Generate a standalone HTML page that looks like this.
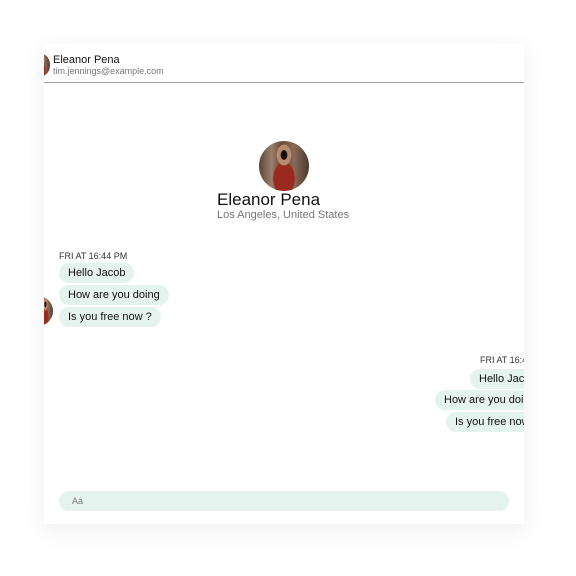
<!DOCTYPE html>
<html><head><style>
body{margin:0;width:576px;height:576px;background:#fff;font-family:"Liberation Sans",sans-serif;overflow:hidden;position:relative}
.card{position:absolute;left:44px;top:44px;width:480px;height:480px;background:#fff;box-shadow:0 6px 24px rgba(0,0,0,.07);overflow:hidden}
.abs{position:absolute;white-space:nowrap}
.b{position:absolute;height:20px;line-height:21px;background:#e5f3ef;border-radius:10px;font-size:11px;color:#111;padding:0 9px;white-space:nowrap}
.ts{position:absolute;font-size:9px;color:#333;white-space:nowrap}
.av{position:absolute;border-radius:50%;background:radial-gradient(ellipse at 50% 28%,#1a0f0a 0 9%,#b88a70 10% 20%,transparent 21%),radial-gradient(ellipse at 50% 75%,#9a2a20 0 30%,transparent 31%),linear-gradient(90deg,#5a4438,#9a7e6a 25%,#6a4a3a 45%,#8a6a58 70%,#4a3a30)}
</style></head><body>
<div class="card">
  <div class="av" style="left:-10px;top:10px;width:16px;height:22px"></div>
  <div class="abs" style="left:9px;top:10px;font-size:11px;color:#111">Eleanor Pena</div>
  <div class="abs" style="left:9px;top:22px;font-size:9px;color:#777">tim.jennings@example.com</div>
  <div style="position:absolute;left:0;top:38px;width:480px;height:1px;background:#9a9ea6"></div>

  <div class="av" style="left:215px;top:97px;width:50px;height:50px"></div>
  <div class="abs" style="left:173px;top:146px;font-size:17px;color:#111">Eleanor Pena</div>
  <div class="abs" style="left:173px;top:165px;font-size:11px;color:#777">Los Angeles, United States</div>

  <div class="ts" style="left:15px;top:207px">FRI AT 16:44 PM</div>
  <div class="b" style="left:15px;top:219px">Hello Jacob</div>
  <div class="b" style="left:15px;top:241px">How are you doing</div>
  <div class="b" style="left:15px;top:263px">Is you free now ?</div>
  <div class="av" style="left:-6px;top:252px;width:15px;height:30px;border-radius:0 15px 15px 0"></div>

  <div class="ts" style="left:436px;top:311px">FRI AT 16:44 PM</div>
  <div class="b" style="left:426px;top:325px">Hello Jacob</div>
  <div class="b" style="left:391px;top:346px">How are you doing</div>
  <div class="b" style="left:402px;top:368px">Is you free now ?</div>

  <div style="position:absolute;left:15px;top:447px;width:450px;height:20px;border-radius:10px;background:#e5f3ef"></div>
  <div class="abs" style="left:28px;top:452px;font-size:9px;color:#777">Aa</div>
</div>
</body></html>
